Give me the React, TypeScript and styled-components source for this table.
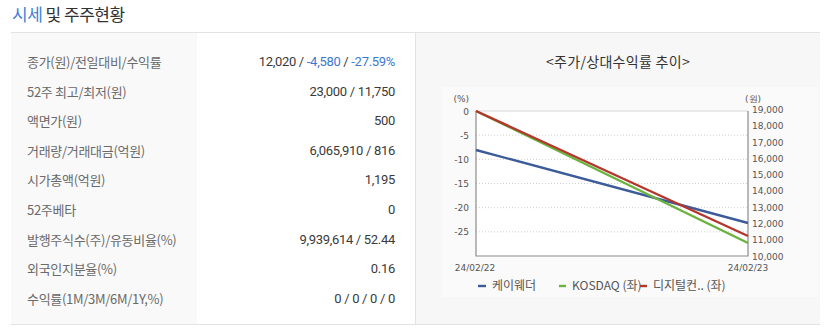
import styled, { createGlobalStyle } from 'styled-components';

const GlobalStyle = createGlobalStyle`
    body {
        margin: 0;
        background: #fff;
        font-family: 'Noto Sans CJK KR', 'Noto Sans', sans-serif;
    }
`;

const Wrapper = styled.div`
    width: 809px;
    margin-left: 11px;
`;

const Header = styled.h2`
    margin: 0;
    height: 33px;
    padding-left: 1px;
    box-sizing: border-box;
    border-bottom: 1px solid #e3e3e3;
    font-size: 17px;
    font-weight: 400;
    line-height: 28px;
    color: #333;
    letter-spacing: -0.5px;
`;

const Accent = styled.span`
    color: #3d7fd6;
`;

const Minus = styled.span`
    color: #3c78d0;
`;

const Body = styled.div`
    display: grid;
    grid-template-columns: 404px 1fr;
    height: 291px;
    border-bottom: 1px solid #e3e3e3;
`;

const InfoTable = styled.table`
    border-collapse: collapse;
    width: 100%;
    height: 100%;
    background: linear-gradient(to right, #f9f9f9 186px, #fff 186px);

    tbody::before,
    tbody::after {
        content: '';
        display: table-row;
    }
    tbody::before {
        height: 14px;
    }
    tbody::after {
        height: 11px;
    }

    th,
    td {
        height: 29.5px;
        padding: 0;
        font-size: 13px;
        font-weight: 400;
        letter-spacing: -0.3px;
        white-space: nowrap;
    }

    th {
        width: 186px;
        padding-left: 16px;
        box-sizing: border-box;
        text-align: left;
        color: #6a6a6a;
    }

    td {
        padding-right: 20px;
        text-align: right;
        color: #3a3a3a;
        font-family: Roboto, 'Noto Sans', sans-serif;
    }
`;

const ChartPanel = styled.div`
    display: flex;
    flex-direction: column;
    align-items: flex-end;
    border-left: 1px solid #e3e3e3;
    background: #f7f7f7;
`;

const ChartTitle = styled.div`
    align-self: stretch;
    height: 54px;
    padding-top: 18px;
    box-sizing: border-box;
    text-align: center;
    font-size: 14px;
    font-weight: 400;
    color: #333;
    letter-spacing: 0.3px;
`;

const ChartSvg = styled.svg`
    display: block;
    margin-right: 2px;
    background: #fafafa;

    .tick text {
        font-family: 'DejaVu Sans', Tahoma, sans-serif;
        font-size: 9px;
        fill: #555;
    }

    .legend text {
        font-family: 'Noto Sans CJK KR', 'Noto Sans', sans-serif;
        font-size: 12px;
        fill: #555;
    }
`;

type Row = { label: string; value: React.ReactNode };

const ROWS: Row[] = [
    {
        label: '종가(원)/전일대비/수익률',
        value: (
            <>
                12,020 / <Minus>-4,580</Minus> / <Minus>-27.59%</Minus>
            </>
        ),
    },
    { label: '52주 최고/최저(원)', value: '23,000 / 11,750' },
    { label: '액면가(원)', value: '500' },
    { label: '거래량/거래대금(억원)', value: '6,065,910 / 816' },
    { label: '시가총액(억원)', value: '1,195' },
    { label: '52주베타', value: '0' },
    { label: '발행주식수(주)/유동비율(%)', value: '9,939,614 / 52.44' },
    { label: '외국인지분율(%)', value: '0.16' },
    { label: '수익률(1M/3M/6M/1Y,%)', value: '0 / 0 / 0 / 0' },
];

const LEFT_TICKS = [0, -5, -10, -15, -20, -25];
const RIGHT_TICKS = [19, 18, 17, 16, 15, 14, 13, 12, 11, 10];

// plot box in svg coords
const PX0 = 61;
const PX1 = 333;
const PY0 = 24;
const PY1 = 169;
const pctY = (v: number) => PY0 + (-v / 30) * (PY1 - PY0);
const wonY = (k: number) => PY0 - 1.5 + ((19 - k) / 9) * (PY1 - PY0 + 1.5);

const SERIES = [
    { color: '#3c5b98', from: 151 - 88, to: 224 - 88 },
    { color: '#69b33e', from: PY0, to: 244 - 88 },
    { color: '#b3372c', from: PY0, to: 237 - 88 },
];

const Chart = () => (
    <ChartSvg width={376} height={210} viewBox="27 0 376 210">
        <rect x={PX0} y={PY0} width={PX1 - PX0} height={PY1 - PY0} fill="#fff" />
        {LEFT_TICKS.slice(1).map((t) => (
            <line
                key={t}
                x1={PX0}
                x2={PX1}
                y1={pctY(t)}
                y2={pctY(t)}
                stroke="#cfcfcf"
                strokeDasharray="1 2"
            />
        ))}
        <line x1={PX0} x2={PX1} y1={PY0} y2={PY0} stroke="#d8d8d8" />
        <path
            d={`M${PX0} ${PY0} V${PY1} H${PX1} V${PY0}`}
            fill="none"
            stroke="#8c8c8c"
            strokeWidth={1.2}
        />
        {SERIES.map((s) => (
            <line
                key={s.color}
                x1={PX0}
                y1={s.from}
                x2={PX1}
                y2={s.to}
                stroke={s.color}
                strokeWidth={2.4}
            />
        ))}
        <g className="tick" textAnchor="end">
            <text x={54} y={15}>
                (%)
            </text>
            {LEFT_TICKS.map((t) => (
                <text key={t} x={54} y={pctY(t) + 3.5}>
                    {t}
                </text>
            ))}
        </g>
        <g className="tick" textAnchor="start">
            <text x={330} y={15}>
                (원)
            </text>
            {RIGHT_TICKS.map((k) => (
                <text key={k} x={337} y={wonY(k) + 3.5}>
                    {k},000
                </text>
            ))}
        </g>
        <g className="tick" textAnchor="middle">
            <text x={60} y={184}>
                24/02/22
            </text>
            <text x={333} y={184}>
                24/02/23
            </text>
        </g>
        <g className="legend">
            <line x1={63} x2={71} y1={199} y2={199} stroke="#3c5b98" strokeWidth={2.4} />
            <text x={77} y={203}>
                케이웨더
            </text>
            <line x1={144} x2={151} y1={199} y2={199} stroke="#69b33e" strokeWidth={2.4} />
            <text x={157} y={203}>
                KOSDAQ (좌)
            </text>
            <line x1={225} x2={232} y1={199} y2={199} stroke="#b3372c" strokeWidth={2.4} />
            <text x={238} y={203}>
                디지털컨.. (좌)
            </text>
        </g>
    </ChartSvg>
);

const App = () => {
    return (
        <>
            <GlobalStyle />
            <Wrapper>
                <Header>
                    <Accent>시세</Accent> 및 주주현황
                </Header>
                <Body>
                    <InfoTable>
                        <tbody>
                            {ROWS.map((row) => (
                                <tr key={row.label}>
                                    <th>{row.label}</th>
                                    <td>{row.value}</td>
                                </tr>
                            ))}
                        </tbody>
                    </InfoTable>
                    <ChartPanel>
                        <ChartTitle>&lt;주가/상대수익률 추이&gt;</ChartTitle>
                        <Chart />
                    </ChartPanel>
                </Body>
            </Wrapper>
        </>
    );
};

export default App;
